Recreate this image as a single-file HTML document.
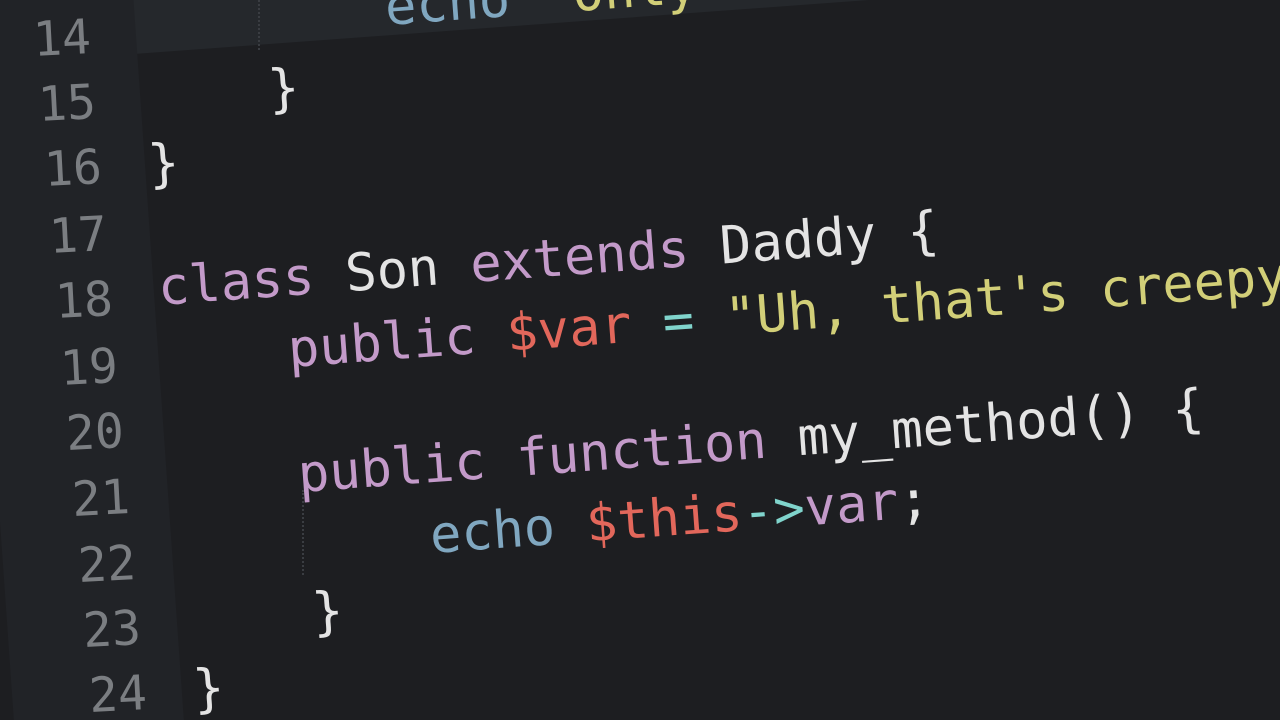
<!DOCTYPE html>
<html><head><meta charset="utf-8"><style>
html,body{margin:0;padding:0;width:1280px;height:720px;overflow:hidden}
body{background:#1d1e21;position:relative;font-family:"DejaVu Sans Mono","Liberation Mono",monospace}
.gut{position:absolute;left:-40px;top:-50px;width:170px;height:800px;background:#212327;transform:skewX(4deg);transform-origin:top left}
.top{position:absolute;left:120px;top:-120px;width:1400px;height:175px;background:#25282c;transform:rotate(-4.2deg);transform-origin:left bottom}
.l{position:absolute;white-space:pre;font-size:52px;line-height:1;transform-origin:left center;transform:rotate(-4.2deg);color:#e4e4e4}
.n{position:absolute;font-size:48px;line-height:1;color:#7b7e82;transform:rotate(-3deg);transform-origin:left center}
.k{color:#c39ac9}.w{color:#e8e8e8}.r{color:#e2675b}.c{color:#80d4cc}.y{color:#d2cf78}.b{color:#80a7c0}
.guide{position:absolute;border-left:2px dotted #3a3d42}
</style></head><body>
<div class="top"></div>
<div class="gut"></div>
<div class="guide" style="left:258px;top:0;height:50px"></div>
<div class="guide" style="left:302px;top:490px;height:85px"></div>

<div class="n" style="left:33px;top:16px">14</div>
<div class="n" style="left:38px;top:81px">15</div>
<div class="n" style="left:44px;top:146px">16</div>
<div class="n" style="left:49px;top:213px">17</div>
<div class="n" style="left:55px;top:278px">18</div>
<div class="n" style="left:60px;top:345px">19</div>
<div class="n" style="left:66px;top:410px">20</div>
<div class="n" style="left:72px;top:476px">21</div>
<div class="n" style="left:78px;top:542px">22</div>
<div class="n" style="left:83px;top:607px">23</div>
<div class="n" style="left:89px;top:672px">24</div>

<div class="l" style="left:385px;top:-18px"><span class="b">echo</span> <span class="y">"Only</span></div>
<div class="l" style="left:268px;top:64px">}</div>
<div class="l" style="left:148px;top:139px">}</div>
<div class="l" style="left:158px;top:262px"><span class="k">class</span> Son <span class="k">extends</span> Daddy {</div>
<div class="l" style="left:288px;top:324px"><span class="k">public</span> <span class="r">$var</span> <span class="c">=</span> <span class="y">"Uh, that's creepy"</span></div>
<div class="l" style="left:298px;top:449px"><span class="k">public</span> <span class="k">function</span> my_method() {</div>
<div class="l" style="left:430px;top:510px"><span class="b">echo</span> <span class="r">$this</span><span class="c">-&gt;</span><span class="k">var</span>;</div>
<div class="l" style="left:312px;top:587px">}</div>
<div class="l" style="left:193px;top:664px">}</div>
</body></html>
